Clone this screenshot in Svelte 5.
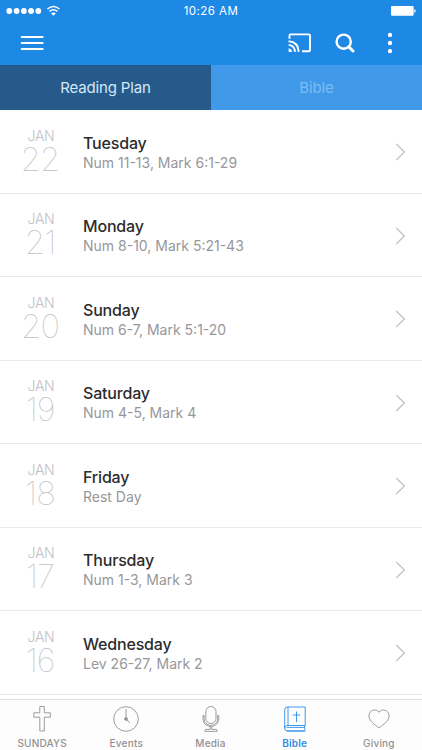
<script>
  const days = [
    { date: '22', name: 'Tuesday', reading: 'Num 11-13, Mark 6:1-29' },
    { date: '21', name: 'Monday', reading: 'Num 8-10, Mark 5:21-43' },
    { date: '20', name: 'Sunday', reading: 'Num 6-7, Mark 5:1-20' },
    { date: '19', name: 'Saturday', reading: 'Num 4-5, Mark 4' },
    { date: '18', name: 'Friday', reading: 'Rest Day' },
    { date: '17', name: 'Thursday', reading: 'Num 1-3, Mark 3' },
    { date: '16', name: 'Wednesday', reading: 'Lev 26-27, Mark 2' }
  ];
</script>

<div class="app">
  <header>
    <div class="status">
      <svg class="signal" width="56" height="12" viewBox="0 0 56 12" fill="#fff">
        <circle cx="3.3" cy="6" r="2.9" /><circle cx="10.6" cy="6" r="2.9" /><circle cx="17.9" cy="6" r="2.9" /><circle cx="25.1" cy="6" r="2.9" /><circle cx="32.3" cy="6" r="2.9" />
        <g fill="none" stroke="#fff" stroke-width="1.5">
          <path d="M41.4 4Q47.4-1 53.4 4M43.5 6.3Q47.4 3.1 51.3 6.3" />
        </g>
        <path d="M45 8.3Q47.4 6.5 49.8 8.3L47.4 10.7Z" />
      </svg>
      <span class="time">10:26 AM</span>
      <svg class="battery" width="25" height="10" viewBox="0 0 25 10" fill="#fff">
        <rect width="22.6" height="9.8" rx="1" /><path d="M23.2 3.2q1.5 0 1.5 1.7t-1.5 1.7z" />
      </svg>
    </div>
    <div class="toolbar">
      <svg width="24" height="18" viewBox="0 0 24 18" stroke="#fff" stroke-width="2" stroke-linecap="round"><path d="M1.7 3h21M1.7 9h21M1.7 15h21" /></svg>
      <div class="actions">
        <svg width="24" height="20" viewBox="0 0 24 20" fill="none" stroke="#fff" stroke-width="1.9">
          <path d="M1.5 5.8V2.4Q1.5 1.4 2.5 1.4H21Q22 1.4 22 2.4V17.2Q22 18.2 21 18.2H14" />
          <path d="M.6 8.2Q10.2 8.9 10.7 18.9M.6 11.9Q6.5 12.4 7 18.9" />
          <path d="M.6 15.2Q3.8 15.7 4 19H.6Z" fill="#fff" stroke="none" />
        </svg>
        <svg width="20" height="20" viewBox="0 0 20 20" fill="none" stroke="#fff" stroke-width="2.4"><circle cx="8.7" cy="8.7" r="7.1" /><path d="M14 14l4 4" stroke-width="3" stroke-linecap="round" /></svg>
        <svg width="6" height="22" viewBox="0 0 6 22" fill="#fff"><circle cx="3" cy="2.9" r="2.2" /><circle cx="3" cy="11" r="2.2" /><circle cx="3" cy="19.1" r="2.2" /></svg>
      </div>
    </div>
  </header>

  <nav class="segments">
    <div class="segment selected">Reading Plan</div>
    <div class="segment">Bible</div>
  </nav>

  <main>
    {#each days as day}
      <article>
        <div class="date"><span class="month">JAN</span><span class="number">{day.date}</span></div>
        <div class="info"><span class="name">{day.name}</span><span class="reading">{day.reading}</span></div>
        <svg class="chevron" width="11" height="18" viewBox="0 0 11 18" fill="none" stroke="#c0c0c4" stroke-width="1.2"><path d="M1.2 1L9.4 9L1.2 17" /></svg>
      </article>
    {/each}
  </main>

  <footer>
    <div class="tab">
      <svg width="28" height="28" viewBox="0 0 28 28"><path d="M11.8 1.5h4.5v6.3h6v4.4h-6V26h-4.5V12.2h-6V7.8h6z" /></svg>
      <span>SUNDAYS</span>
    </div>
    <div class="tab">
      <svg width="28" height="28" viewBox="0 0 28 28"><circle cx="14" cy="14" r="12.3" /><path d="M14 4v10l4 3.8" /><circle cx="14" cy="14" r="1.4" fill="currentColor" /></svg>
      <span>Events</span>
    </div>
    <div class="tab">
      <svg width="28" height="28" viewBox="0 0 28 28"><rect x="8.8" y="1.5" width="10.2" height="17" rx="5.1" /><path d="M7.1 10.4H6v3.2c0 4.3 3.2 7.8 7.9 7.8s7.9-3.5 7.9-7.8v-3.2h-1.1v3.2c0 3.7-2.8 6.7-6.8 6.7s-6.8-3-6.8-6.7zM13.2 21.4v3H9q-1.2 0-1.2 2h12.4q0-2-1.2-2h-4.2v-3" /></svg>
      <span>Media</span>
    </div>
    <div class="tab active">
      <svg width="28" height="28" viewBox="0 0 28 28"><path d="M6.5 2H24.2v18.5H6.2Q3.7 20.7 3.7 23.3V4.5Q3.7 2 6.5 2ZM7 2v18.5M3.7 23.3q0 2.7 2.5 2.7h17.2q1.2-1 0-4.1l.8-1.4M6.2 26h18M5.7 22.4H23.5" /><path d="M15.5 6.5v10.7M11.8 10h7.4" /></svg>
      <span>Bible</span>
    </div>
    <div class="tab">
      <svg width="28" height="28" viewBox="0 0 28 28"><path d="M14 7.3C11.5 2.9 3.7 5 3.9 11.2C4.1 16 9.8 19.7 14 23C18.2 19.7 23.9 16 24.1 11.2C24.3 5 16.5 2.9 14 7.3Z" /></svg>
      <span>Giving</span>
    </div>
  </footer>
</div>

<style>
  :global(body) { margin: 0; background: #fff; }
  .app { width: 422px; height: 750px; display: flex; flex-direction: column; overflow: hidden; background: #fff; font-family: Inter, "Liberation Sans", sans-serif; }
  svg { display: block; flex: none; }
  header { height: 65px; flex: none; background: #1e88e5; }
  .status { height: 21px; display: grid; grid-template-columns: 1fr auto 1fr; align-items: center; padding: 0 6px; box-sizing: border-box; }
  .time { color: #fff; font-size: 11.5px; line-height: 20px; letter-spacing: .45px; padding-top: 1px; }
  .battery { justify-self: end; }
  .toolbar { height: 44px; display: flex; align-items: center; justify-content: space-between; padding: 0 29px 0 20px; }
  .actions { display: flex; align-items: center; }
  .actions svg:nth-child(2) { margin-left: 23px; }
  .actions svg:nth-child(3) { margin-left: 32px; }
  .segments { height: 45px; flex: none; display: flex; }
  .segment { flex: 1; background: #4099e9; color: #7dbcf3; font-size: 15px; line-height: 46px; text-align: center; letter-spacing: -.15px; }
  .selected { background: #265a8b; color: #d5e8f7; }
  main { flex: 1; min-height: 0; overflow: hidden; }
  article { height: 83.5px; box-sizing: border-box; border-bottom: 1px solid #e9e9eb; display: flex; padding-right: 16px; }
  .date { width: 82px; display: flex; flex-direction: column; align-items: center; color: #bfbfc5; padding-top: 16.7px; }
  .month { font-size: 14px; line-height: 18px; font-weight: 300; letter-spacing: -.3px; }
  .number { font-size: 33px; line-height: 29px; font-weight: 100; letter-spacing: -1px; margin-right: 2px; }
  .info { flex: 1; display: flex; flex-direction: column; padding: 22.7px 0 0 1px; }
  .name { font-size: 16px; line-height: 20px; font-weight: 500; color: #2c2c2e; letter-spacing: -.18px; }
  .reading { font-size: 14px; line-height: 19px; color: #97979b; }
  .chevron { align-self: center; margin-top: 2px; }
  footer { height: 51px; flex: none; box-sizing: border-box; border-top: 1px solid #dedee0; background: #fdfdfd; display: flex; padding-right: 1px; }
  .tab { flex: 1; display: flex; flex-direction: column; align-items: center; padding-top: 5px; color: #929294; font-size: 10px; font-weight: 500; line-height: 14px; letter-spacing: .2px; }
  .tab svg { fill: none; stroke: currentColor; stroke-width: .9; margin-bottom: 3px; }
  .active { color: #2b8de8; font-weight: 600; }
</style>
